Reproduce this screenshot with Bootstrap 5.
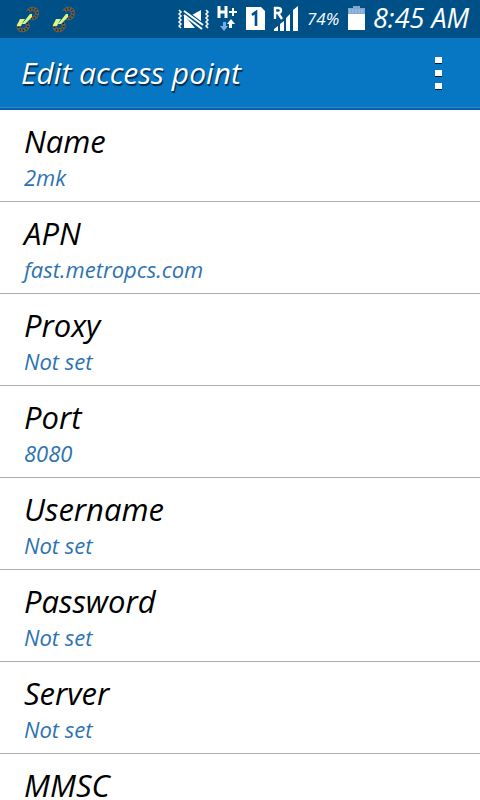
<!DOCTYPE html>
<html lang="en">
<head>
<meta charset="utf-8">
<meta name="viewport" content="width=device-width, initial-scale=1">
<title>Edit access point</title>
<link href="https://cdn.jsdelivr.net/npm/bootstrap@5.3.0/dist/css/bootstrap.min.css" rel="stylesheet">
<style>
  body { font-family: "Choco Cooky", "Open Sans", sans-serif; font-style: italic; color: #000; background: #fff; }
  .status-bar { background: #005088; height: 38px; color: #fff; }
  .status-bar svg { display: block; flex: none; }
  .tray { gap: 8px; padding: 6px 6px 0 0; }
  .notices { gap: 12px; padding: 6px 0 0 16px; }
  .battery-level { font-size: 17px; line-height: 26px; width: 33px; }
  .clock { font-size: 27px; line-height: 24px; width: 101px; white-space: nowrap; }
  .action-bar { background: #0776c3; height: 72px; border-bottom: 2px solid #0560ae; box-shadow: inset 0 -1px #2c88d0; padding: 0 21px; }
  .action-bar h1 { font-size: 30px; line-height: 36px; text-shadow: 1px 2px 1px #002a4c; color: #fff; }
  .more { width: 40px; height: 48px; }
  .pref { height: 92px; padding: 15px 24px 8px; border-color: #adadad; color: #000; }
  .pref-title { font-size: 31px; line-height: 32px; }
  .pref-value { font-size: 22px; line-height: 32px; margin-top: 4px; color: #2d73b0; }
</style>
<script src="https://cdn.jsdelivr.net/npm/bootstrap@5.3.0/dist/js/bootstrap.bundle.min.js"></script>
</head>
<body>
<div class="d-flex flex-column vh-100 overflow-hidden">
  <div class="status-bar d-flex justify-content-between align-items-start flex-shrink-0">
    <div class="notices d-flex">
      <svg width="24" height="27" viewBox="0 0 24 27" aria-hidden="true"><g id="link"><g fill="none" stroke="#665f50" stroke-width="4"><path d="M12 6C14 1 21 2 21 7C21 11 18 13 14 12"/><path d="M3 18C1 23 5 25 8 24C11 23 13 21 11 17"/></g><g fill="none" stroke="#17232a" stroke-width="2" stroke-dasharray="1 2"><path d="M12 6C14 1 21 2 21 7C21 11 18 13 14 12"/><path d="M3 18C1 23 5 25 8 24C11 23 13 21 11 17"/></g><path d="M1 19L4 13H9L7 16L5 20H1ZM6 18L14 8H16V11L9 18Z" fill="#d9f58a"/></g></svg>
      <svg width="24" height="27" viewBox="0 0 24 27" aria-hidden="true"><use href="#link"/></svg>
    </div>
    <div class="tray d-flex">
      <svg width="31" height="26" viewBox="0 0 31 26" role="img" aria-label="Vibrate"><g fill="none" stroke="#fff" stroke-width="1.5"><path d="M1 4L3 6L1 8L3 10L1 12L3 14L1 16L3 18L1 20L3 22M28 4L30 6L28 8L30 10L28 12L30 14L28 16L30 18L28 20L30 22"/></g><path d="M6 9V22H17ZM14 9L23 4V16Z" fill="#fff"/><path d="M5 4L25 19" stroke="#005088" stroke-width="4"/><path d="M6 5L25 19M6 9L24 23" stroke="#fff" stroke-width="2"/></svg>
      <svg width="21" height="26" viewBox="0 0 21 26" role="img" aria-label="H+ data"><path d="M2 0V12M9 0V12M2 6H9" fill="none" stroke="#fff" stroke-width="3"/><path d="M12 6H20M16 2V10" stroke="#fff" stroke-width="2"/><path d="M6 16H9V20H11L7 25L3 20H6Z" fill="#73b0e5"/><path d="M14 13L18 18H15V22H12V18H10Z" fill="#fff"/></svg>
      <svg width="19" height="26" viewBox="0 0 19 26" role="img" aria-label="SIM 1"><path d="M0 1H15L19 5V24H0Z" fill="#fff"/><path d="M6 9L10 6V20" fill="none" stroke="#005088" stroke-width="2.6"/></svg>
      <svg width="26" height="26" viewBox="0 0 26 26" role="img" aria-label="Roaming signal"><path d="M2 13V2H5C9 2 9 7 5 7H2M5 7L9 13" fill="none" stroke="#fff" stroke-width="2.4"/><path d="M1 25V23L5 20V25ZM7 25V18L11 15V25ZM13 25V12L17 8V25ZM20 25V4L25 0V25Z" fill="#fff"/></svg>
      <span class="battery-level">74%</span>
      <div class="d-flex gap-2">
        <svg width="17" height="26" viewBox="0 0 17 26" role="img" aria-label="Battery"><path d="M0 2H5V0H12V2H17V9H0Z" fill="#7fa9cf"/><path d="M1 4H16M1 6H16" stroke="#a5c9e7" stroke-dasharray="2 1"/><path d="M0 8H17V24H0Z" fill="#fff"/></svg>
        <span class="clock">8:45 AM</span>
      </div>
    </div>
  </div>

  <header class="action-bar d-flex align-items-center justify-content-between flex-shrink-0">
    <h1 class="m-0 fw-normal">Edit access point</h1>
    <button type="button" class="more btn p-0 border-0 d-flex align-items-center justify-content-center" aria-label="More options">
      <svg width="8" height="36" viewBox="0 0 8 36" aria-hidden="true"><path d="M0 2H7V9H0ZM0 15H7V22H0ZM0 28H7V35H0Z" fill="#001b30"/><path d="M0 2H7V8H0ZM0 15H7V21H0ZM0 28H7V34H0Z" fill="#fff"/></svg>
    </button>
  </header>

  <main class="list-group list-group-flush flex-grow-1 overflow-hidden">
    <a href="#name" class="pref list-group-item list-group-item-action flex-shrink-0"><div class="pref-title">Name</div><div class="pref-value">2mk</div></a>
    <a href="#apn" class="pref list-group-item list-group-item-action flex-shrink-0"><div class="pref-title">APN</div><div class="pref-value">fast.metropcs.com</div></a>
    <a href="#proxy" class="pref list-group-item list-group-item-action flex-shrink-0"><div class="pref-title">Proxy</div><div class="pref-value">Not set</div></a>
    <a href="#port" class="pref list-group-item list-group-item-action flex-shrink-0"><div class="pref-title">Port</div><div class="pref-value">8080</div></a>
    <a href="#username" class="pref list-group-item list-group-item-action flex-shrink-0"><div class="pref-title">Username</div><div class="pref-value">Not set</div></a>
    <a href="#password" class="pref list-group-item list-group-item-action flex-shrink-0"><div class="pref-title">Password</div><div class="pref-value">Not set</div></a>
    <a href="#server" class="pref list-group-item list-group-item-action flex-shrink-0"><div class="pref-title">Server</div><div class="pref-value">Not set</div></a>
    <a href="#mmsc" class="pref list-group-item list-group-item-action flex-shrink-0"><div class="pref-title">MMSC</div></a>
  </main>
</div>
</body>
</html>
